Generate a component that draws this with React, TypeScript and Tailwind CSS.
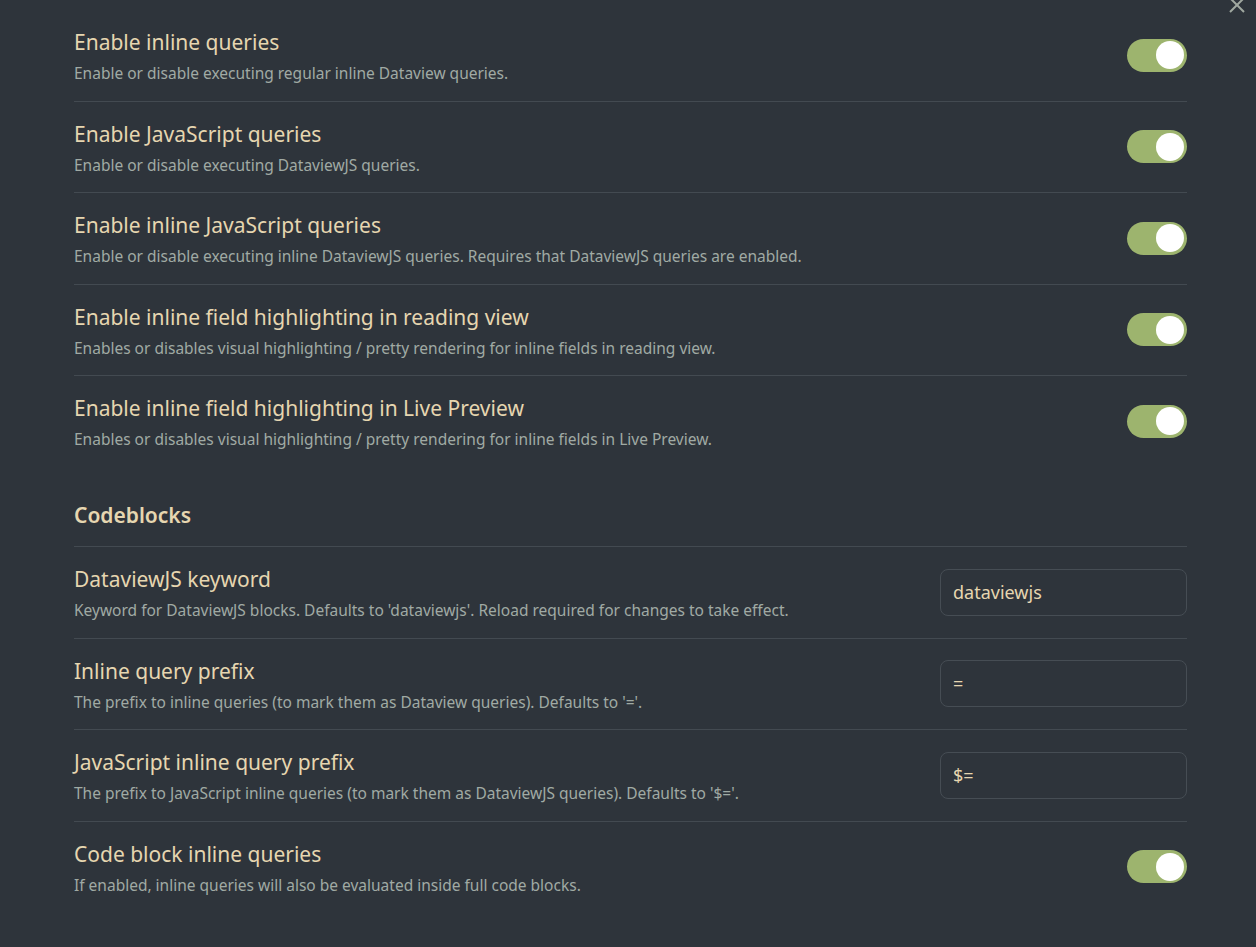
import React from "react";

type Item =
  | { kind: "toggle"; title: string; desc: string }
  | { kind: "input"; title: string; desc: string; value: string };

const top: Item[] = [
  { kind: "toggle", title: "Enable inline queries", desc: "Enable or disable executing regular inline Dataview queries." },
  { kind: "toggle", title: "Enable JavaScript queries", desc: "Enable or disable executing DataviewJS queries." },
  {
    kind: "toggle",
    title: "Enable inline JavaScript queries",
    desc: "Enable or disable executing inline DataviewJS queries. Requires that DataviewJS queries are enabled.",
  },
  {
    kind: "toggle",
    title: "Enable inline field highlighting in reading view",
    desc: "Enables or disables visual highlighting / pretty rendering for inline fields in reading view.",
  },
  {
    kind: "toggle",
    title: "Enable inline field highlighting in Live Preview",
    desc: "Enables or disables visual highlighting / pretty rendering for inline fields in Live Preview.",
  },
];

const code: Item[] = [
  {
    kind: "input",
    title: "DataviewJS keyword",
    desc: "Keyword for DataviewJS blocks. Defaults to 'dataviewjs'. Reload required for changes to take effect.",
    value: "dataviewjs",
  },
  {
    kind: "input",
    title: "Inline query prefix",
    desc: "The prefix to inline queries (to mark them as Dataview queries). Defaults to '='.",
    value: "=",
  },
  {
    kind: "input",
    title: "JavaScript inline query prefix",
    desc: "The prefix to JavaScript inline queries (to mark them as DataviewJS queries). Defaults to '$='.",
    value: "$=",
  },
  {
    kind: "toggle",
    title: "Code block inline queries",
    desc: "If enabled, inline queries will also be evaluated inside full code blocks.",
  },
];

function Toggle() {
  return (
    <div className="w-[60px] h-[33px] rounded-full bg-[#9db46e] flex items-center justify-end pr-[3px] shrink-0">
      <div className="w-[28px] h-[28px] rounded-full bg-white" />
    </div>
  );
}

function Row({ item, first }: { item: Item; first?: boolean }) {
  return (
    <div
      className={`h-[91.5px] flex items-center border-t ${
        first ? "border-transparent" : "border-[#434a51]"
      }`}
    >
      <div className="flex-1 min-w-0 pt-[1px]">
        <div className="text-[21px] leading-[28px] text-[#e6d6b0]">{item.title}</div>
        <div className="mt-[7px] text-[15.5px] leading-[20px] text-[#a0aaa4]">{item.desc}</div>
      </div>
      {item.kind === "toggle" ? (
        <Toggle />
      ) : (
        <div className="w-[247px] h-[47px] rounded-[8px] border border-[#464d54] flex items-center px-[12px] text-[18px] text-[#e6d6b0] shrink-0">
          {item.value}
        </div>
      )}
    </div>
  );
}

export default function App() {
  return (
    <div
      className="relative w-[1256px] h-[947px] overflow-hidden bg-[#2e343b]"
      style={{ fontFamily: '"Noto Sans", "Open Sans", sans-serif' }}
    >
      <div className="absolute right-[10px] top-[-4px] text-[#a0a8a0]">
        <svg width="18" height="18" viewBox="0 0 18 18" fill="none" stroke="currentColor" strokeWidth="2">
          <path d="M2 2 L16 16 M16 2 L2 16" />
        </svg>
      </div>
      <div className="pl-[74px] pr-[69px] pt-[9px]">
        {top.map((it, i) => (
          <Row key={it.title} item={it} first={i === 0} />
        ))}
        <div className="pt-[34.5px] pb-[17px] text-[21px] leading-[28px] font-semibold text-[#e6d6b0]">
          Codeblocks
        </div>
        {code.map((it) => (
          <Row key={it.title} item={it} />
        ))}
      </div>
    </div>
  );
}
